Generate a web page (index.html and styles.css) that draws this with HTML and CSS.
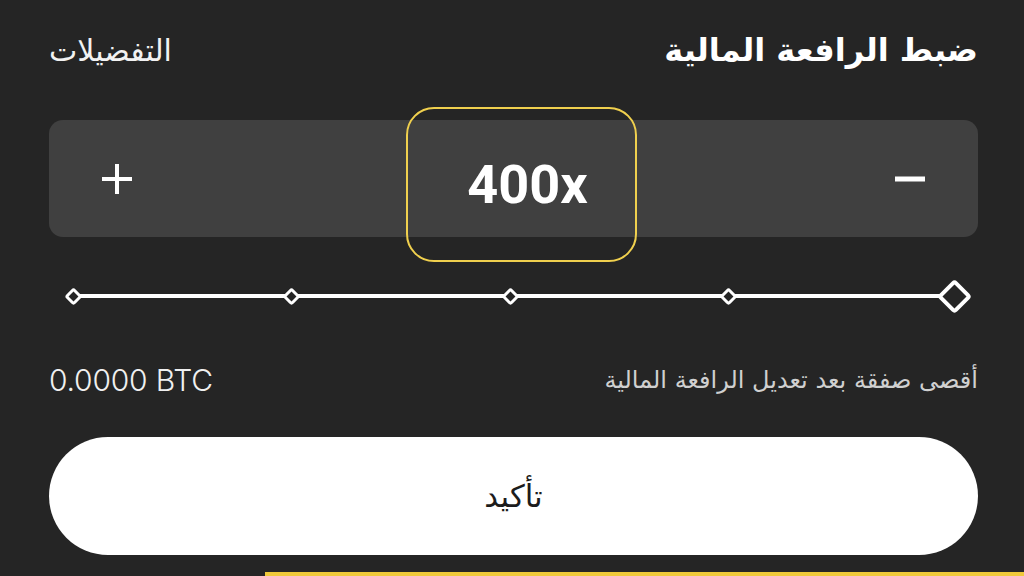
FILE: index.html
```html
<!DOCTYPE html>
<html lang="ar" dir="rtl">
<head>
  <meta charset="UTF-8">
  <meta name="viewport" content="width=device-width, initial-scale=1">
  <title>ضبط الرافعة المالية</title>
  <link rel="stylesheet" href="styles.css">
</head>
<body>

  <div class="sheet">
    <div class="sheet-header">
      <h2 class="sheet-title">ضبط الرافعة المالية</h2>
      <span class="prefs">التفضيلات</span>
    </div>

    <div class="stepper">
      <button class="step-btn minus" aria-label="decrease">
        <svg width="30" height="30" viewBox="0 0 30 30"><rect x="0" y="12.5" width="30" height="5" fill="#fff"/></svg>
      </button>
      <div class="step-value" dir="ltr">400x</div>
      <button class="step-btn plus" aria-label="increase">
        <svg width="30" height="30" viewBox="0 0 30 30"><rect x="0" y="13" width="30" height="4" fill="#fff"/><rect x="13" y="0" width="4" height="30" fill="#fff"/></svg>
      </button>
    </div>

    <div class="slider">
      <span class="tick tick-big"></span>
      <span class="tick"></span>
      <span class="tick"></span>
      <span class="tick"></span>
      <span class="tick"></span>
    </div>

    <div class="info-row">
      <span class="info-label">أقصى صفقة بعد تعديل الرافعة المالية</span>
      <span class="info-value" dir="ltr">0.0000 BTC</span>
    </div>

    <button class="confirm">تأكيد</button>

    <div class="bottom-bar"></div>
  </div>

</body>
</html>
```

FILE: styles.css
```css
body {
  margin: 0;
  background: #252525;
  font-family: "DejaVu Sans", "Noto Sans", sans-serif;
  color: #fff;
  overflow: hidden;
}

.sheet {
  padding: 28px 46px 0 49px;
}

.sheet-header {
  display: flex;
  justify-content: space-between;
  align-items: center;
  height: 44px;
}

.sheet-title {
  margin: 0;
  font-size: 32px;
  font-weight: bold;
}

.prefs {
  font-size: 30px;
  color: #f2f2f2;
}

.stepper {
  margin-top: 48px;
  height: 117px;
  background: #404040;
  border-radius: 14px;
  display: grid;
  grid-template-columns: 341px 231px 1fr;
  grid-template-rows: 117px;
  align-items: center;
}

.step-btn {
  background: none;
  border: none;
  padding: 0;
  width: 30px;
  height: 30px;
  cursor: pointer;
}

.step-btn svg {
  display: block;
}

.minus {
  justify-self: start;
  margin-right: 53px;
}

.plus {
  justify-self: end;
  margin-left: 53px;
}

.step-value {
  align-self: start;
  margin-top: -13px;
  height: 155px;
  box-sizing: border-box;
  border: 2px solid #f0d04e;
  border-radius: 28px;
  display: flex;
  align-items: center;
  justify-content: center;
  padding-left: 12px;
  font-family: Roboto, "Liberation Sans", sans-serif;
  font-size: 54px;
  font-weight: bold;
}

.slider {
  margin: 40px 6px 0 15px;
  height: 38px;
  display: flex;
  justify-content: space-between;
  align-items: center;
  background: linear-gradient(#fff, #fff) no-repeat center / calc(100% - 26px) 4px;
}

.tick {
  width: 13px;
  height: 13px;
  box-sizing: border-box;
  border: 3px solid #fff;
  background: #252525;
  transform: rotate(45deg);
  border-radius: 3px;
  margin: 0 3px;
}

.tick-big {
  width: 25px;
  height: 25px;
  border-width: 4.5px;
  border-radius: 4px;
  margin: 0 5px;
}

.info-row {
  margin-top: 50px;
  height: 30px;
  display: flex;
  justify-content: space-between;
  align-items: center;
}

.info-label {
  font-size: 24px;
  color: #d0d0d0;
}

.info-value {
  font-family: Inter, "Noto Sans", sans-serif;
  font-size: 30px;
  font-weight: 300;
  letter-spacing: -0.2px;
  color: #f0f0f0;
}

.confirm {
  display: block;
  width: 100%;
  margin-top: 42px;
  height: 118px;
  border: none;
  border-radius: 60px;
  background: #fff;
  color: #1c1c1c;
  font-family: "DejaVu Sans", sans-serif;
  font-size: 31px;
  cursor: pointer;
}

.bottom-bar {
  margin: 17px -46px 0 216px;
  height: 4px;
  background: #f0c93a;
}
```
